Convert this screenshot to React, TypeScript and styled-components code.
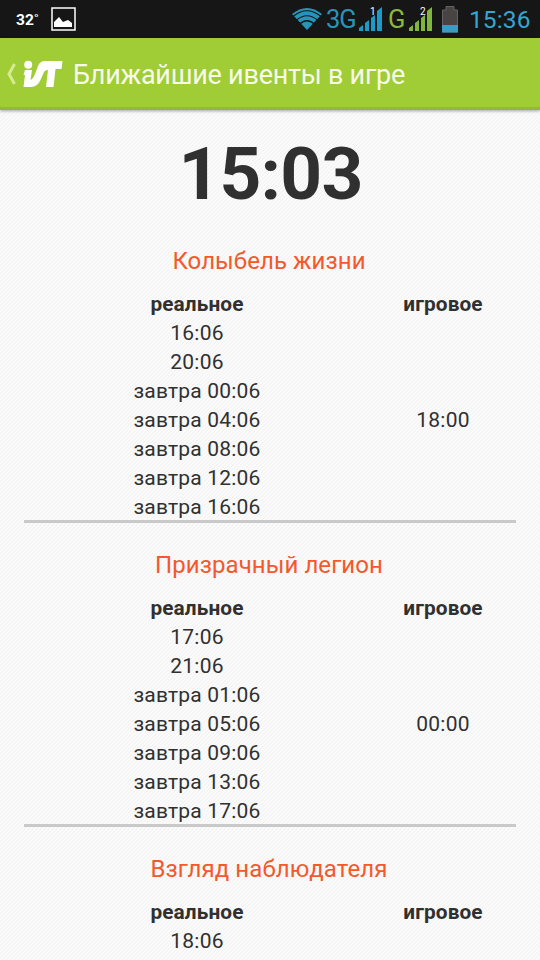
import React from 'react';
import styled, { createGlobalStyle } from 'styled-components';

const Global = createGlobalStyle`
  * { box-sizing: border-box; }
  html, body { margin: 0; padding: 0; }
  body { font-family: Roboto, 'Noto Sans', sans-serif; overflow: hidden; background: #f9f9f9; }
`;

const Screen = styled.div`
  width: 540px;
  height: 960px;
  overflow: hidden;
  display: flex;
  flex-direction: column;
`;

const StatusBar = styled.header`
  height: 38px;
  flex: none;
  display: flex;
  align-items: center;
  justify-content: space-between;
  background: #161616;
  padding: 0 10px 0 16px;
`;

const StatusGroup = styled.div`
  display: flex;
  align-items: center;
  height: 38px;
`;

const Temperature = styled.span`
  width: 35px;
  color: #fff;
  font-size: 15.5px;
  line-height: 38px;
  font-weight: 700;
  padding-top: 1px;
`;

const Network = styled.span<{ $color: string; $width: number }>`
  width: ${(p) => p.$width}px;
  color: ${(p) => p.$color};
  font-size: 25.5px;
  font-weight: 400;
  letter-spacing: -1px;
  line-height: 38px;
  white-space: nowrap;
`;

const StatusTime = styled.span`
  width: 61px;
  color: #33a7cf;
  font-size: 24.5px;
  line-height: 38px;
  letter-spacing: 0.1px;
  padding-top: 1px;
  white-space: nowrap;
`;

const Glyph = styled.svg<{ $gap?: number }>`
  display: block;
  flex: none;
  margin-right: ${(p) => p.$gap ?? 0}px;
`;

const ActionBar = styled.nav`
  position: relative;
  z-index: 1;
  height: 72px;
  flex: none;
  display: flex;
  align-items: center;
  padding: 2px 0 0 6px;
  background: #a0cc35;
  border-bottom: 3px solid #93b936;
  box-shadow: 0 1px 3px rgba(0, 0, 0, 0.35);
`;

const BarTitle = styled.h1`
  margin: 0;
  padding-top: 2px;
  color: #f7fbea;
  font-size: 27px;
  letter-spacing: -0.25px;
  line-height: 40px;
  font-weight: 400;
  white-space: nowrap;
`;

const Content = styled.main`
  flex: 1;
  min-height: 0;
  overflow: hidden;
  padding: 0 24px;
  color: #303030;
  background: linear-gradient(
      135deg,
      #fbfbfb 31%,
      #f8f8f8 31% 44%,
      #f2f2f2 44% 56%,
      #fbfbfb 56% 81%,
      #f8f8f8 81%
    )
    0 0 / 4px 4px;
`;

const Clock = styled.div`
  height: 126px;
  line-height: 129px;
  text-align: center;
  font-size: 73px;
  letter-spacing: -0.8px;
  padding-left: 1px;
  font-weight: 700;
`;

const EventSection = styled.section`
  height: 304px;
  display: flex;
  flex-direction: column;
`;

const EventTitle = styled.h2`
  margin: 0 0 14px;
  padding: 10px 2px 0 0;
  height: 40px;
  flex: none;
  line-height: 30px;
  color: #f4582b;
  font-size: 24px;
  letter-spacing: 0.08px;
  font-weight: 400;
  text-align: center;
  white-space: nowrap;
`;

const Table = styled.div`
  height: 233px;
  flex: none;
  display: grid;
  grid-template-columns: 346px 146px;
  grid-template-rows: 29px 203px;
  align-items: center;
  text-align: center;
  border-bottom: 3px solid #cacaca;
`;

const Head = styled.div`
  line-height: 29px;
  font-size: 20.8px;
  letter-spacing: 0.1px;
  font-weight: 700;
`;

const Times = styled.div`
  font-size: 21px;
  letter-spacing: 0.2px;
  line-height: 29px;
`;

const Signal = ({ color, label, gap }: { color: string; label: string; gap: number }) => (
  <Glyph $gap={gap} width="26" height="26" viewBox="0 0 26 26">
    <path fill={color} d="M0 25V22L4 19V25ZM6 25V17L10 14V25ZM12 25V12L16 9V25ZM18 25V5L23 1V25Z" />
    <text x="11" y="9" fill="#fff" fontSize="10" fontFamily="Roboto, sans-serif">{label}</text>
  </Glyph>
);

const events = [
  { title: 'Колыбель жизни', real: ['16:06', '20:06', 'завтра 00:06', 'завтра 04:06', 'завтра 08:06', 'завтра 12:06', 'завтра 16:06'], game: '18:00' },
  { title: 'Призрачный легион', real: ['17:06', '21:06', 'завтра 01:06', 'завтра 05:06', 'завтра 09:06', 'завтра 13:06', 'завтра 17:06'], game: '00:00' },
  { title: 'Взгляд наблюдателя', real: ['18:06', '', '', '', '', '', ''], game: '' },
];

export default function App() {
  return (
    <Screen>
      <Global />
      <StatusBar>
        <StatusGroup>
          <Temperature>32˚</Temperature>
          <Glyph width="25" height="24" viewBox="0 0 25 24">
            <rect x="1" y="1" width="23" height="22" fill="none" stroke="#fff" strokeWidth="1.5" />
            <path fill="#fff" d="M3 20V15L8 10L12 15L17 13L21 16V20Z" />
          </Glyph>
        </StatusGroup>
        <StatusGroup>
          <Glyph $gap={2} width="32" height="24" viewBox="0 0 32 24">
            <path fill="#2795b9" d="M0 7Q15-5 30 7L15 23Z" />
            <g fill="none" stroke="#161616" strokeWidth="1.2">
              <path d="M1 9.5Q15-2 29 9.5" />
              <path d="M4 13.5Q15 4 26 13.5" />
              <path d="M7 17.5Q15 10 23 17.5" />
            </g>
          </Glyph>
          <Network $color="#2795b9" $width={33}>3G</Network>
          <Signal color="#1b9bc8" label="1" gap={3} />
          <Network $color="#8bb93c" $width={21}>G</Network>
          <Signal color="#80b63c" label="2" gap={7} />
          <Glyph $gap={11} width="16" height="27" viewBox="0 0 16 27">
            <path fill="#484444" stroke="#626262" d="M.5 4H4V.5H12V4H15.5V26H.5Z" />
            <path fill="#3b9bc2" d="M0 19H16V26.5H0Z" />
          </Glyph>
          <StatusTime>15:36</StatusTime>
        </StatusGroup>
      </StatusBar>
      <ActionBar>
        <Glyph $gap={6} width="11" height="22" viewBox="0 0 11 22">
          <path d="M8.5 1L3 11L8.5 21" fill="none" stroke="#d4eb92" strokeWidth="3" />
        </Glyph>
        <Glyph $gap={9} width="41" height="28" viewBox="0 0 41 28">
          <g fill="#fff">
            <circle cx="5.2" cy="4.8" r="4" />
            <path d="M2 10H9L7.5 20Q10 19 12 14L15 6Q17 1 22 1H39.5L38.5 9H32.5L30.5 27H23L25 10Q22 10 21 12L17.5 20Q14.5 27 8 27H.5L2 15H.5Z" />
          </g>
        </Glyph>
        <BarTitle>Ближайшие ивенты в игре</BarTitle>
      </ActionBar>
      <Content>
        <Clock>15:03</Clock>
        {events.map((event) => (
          <EventSection key={event.title}>
            <EventTitle>{event.title}</EventTitle>
            <Table>
              <Head>реальное</Head>
              <Head>игровое</Head>
              <Times>{event.real.map((time, i) => <div key={i}>{time || '\u00a0'}</div>)}</Times>
              <Times>{event.game}</Times>
            </Table>
          </EventSection>
        ))}
      </Content>
    </Screen>
  );
}
